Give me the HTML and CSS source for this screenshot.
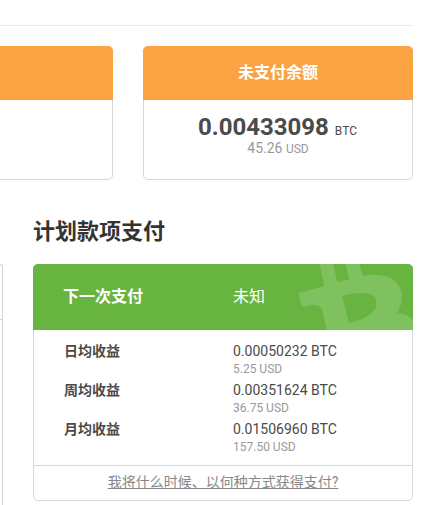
FILE: index.html
```html
<!DOCTYPE html>
<html lang="zh-CN">
<head>
    <meta charset="UTF-8">
    <meta name="viewport" content="width=device-width, initial-scale=1.0">
    <title>计划款项支付</title>
    <link rel="stylesheet" href="styles.css">
</head>
<body>
    <div class="page">
        <hr>
        <div class="balances">
            <div class="card previous">
                <div class="card-head"></div>
            </div>
            <div class="card balance">
                <div class="card-head">未支付余额</div>
                <div class="amount">0.00433098 <small>BTC</small></div>
                <div class="fiat">45.26 <small>USD</small></div>
            </div>
        </div>
        <div class="columns">
            <div class="side">
                <div class="side-head"></div>
            </div>
            <div class="payments">
                <h2>计划款项支付</h2>
                <div class="card">
                    <div class="next">
                        <strong>下一次支付</strong>
                        <span>未知</span>
                        <svg class="coin" viewBox="0 0 360 198">
                            <path fill-rule="evenodd" d="M16 88L94 66L80 0H121L133 55L169 46L157 0H199L209 36C260 26 296 36 316 62C332 84 330 126 309 150C334 147 350 156 360 168V198H101L88 139C80 119 67 120 27 128ZM147 95L168 176C210 168 250 151 251 118C247 84 218 80 147 95Z"/>
                        </svg>
                    </div>
                    <div class="earnings">
                        <div class="row">
                            <strong>日均收益</strong>
                            <div>0.00050232 BTC<small>5.25 USD</small></div>
                        </div>
                        <div class="row">
                            <strong>周均收益</strong>
                            <div>0.00351624 BTC<small>36.75 USD</small></div>
                        </div>
                        <div class="row">
                            <strong>月均收益</strong>
                            <div>0.01506960 BTC<small>157.50 USD</small></div>
                        </div>
                    </div>
                    <div class="card-foot">
                        <a href="#">我将什么时候、以何种方式获得支付?</a>
                    </div>
                </div>
            </div>
        </div>
    </div>
</body>
</html>
```

FILE: styles.css
```css
* {
    box-sizing: border-box;
}
body {
    margin: 0;
    height: 505px;
    overflow: hidden;
    background: #fff;
    color: #4a4a4a;
    font-family: Roboto, "Noto Sans CJK SC", sans-serif;
    font-size: 14px;
}
.page {
    width: 413px;
    padding-top: 25px;
}
hr {
    margin: 0 0 20px;
    border: 0;
    border-top: 1px solid #e8e8e8;
}
.balances {
    display: flex;
    gap: 30px;
    height: 134px;
}
.card {
    border: 1px solid #d6d6d6;
    border-radius: 5px;
    text-align: center;
}
.previous {
    width: 113px;
    border-left: 0;
    border-radius: 0 5px 5px 0;
}
.balance {
    width: 270px;
}
.card-head {
    height: 54px;
    margin: -1px -1px 0;
    border-radius: 5px 5px 0 0;
    background: #fba342;
    color: #fff;
    font-size: 16px;
    font-weight: bold;
    line-height: 53px;
}
.previous .card-head {
    border-radius: 0 5px 0 0;
}
.amount {
    height: 26px;
    margin-top: 14px;
    padding-right: 1px;
    font-size: 24px;
    font-weight: bold;
    line-height: 26px;
}
.amount small {
    font-size: 12px;
    font-weight: normal;
}
.fiat {
    height: 16px;
    color: #999;
    line-height: 16px;
}
.fiat small {
    font-size: 12px;
}
.columns {
    display: flex;
    justify-content: space-between;
    height: 325px;
}
.side {
    width: 3px;
    margin-top: 84px;
    border: 1px solid #d6d6d6;
    border-width: 1px 1px 0 0;
    border-radius: 0 5px 0 0;
}
.side-head {
    height: 55px;
    border-bottom: 1px solid #d6d6d6;
}
.payments {
    width: 380px;
}
h2 {
    margin: 34px 0 14px;
    color: #333;
    font-size: 22px;
    line-height: 36px;
}
.next {
    display: flex;
    height: 66px;
    margin: -1px -1px 0;
    padding-left: 30px;
    overflow: hidden;
    border-radius: 5px 5px 0 0;
    background: #68b440;
    color: #fff;
    font-size: 16px;
    line-height: 65px;
    text-align: left;
}
.next strong {
    width: 170px;
}
.coin {
    width: 120px;
    height: 66px;
    margin-left: auto;
    fill: #80c15f;
}
.earnings {
    height: 135px;
    padding: 12px 30px 0;
    text-align: left;
}
.row {
    display: flex;
    height: 39px;
    line-height: 19px;
}
.row strong {
    width: 169px;
}
.row small {
    display: block;
    color: #999;
    font-size: 12px;
    line-height: 16px;
}
.card-foot {
    height: 35px;
    border-top: 1px solid #d6d6d6;
    line-height: 33px;
}
.card-foot a {
    color: #888;
}
```
